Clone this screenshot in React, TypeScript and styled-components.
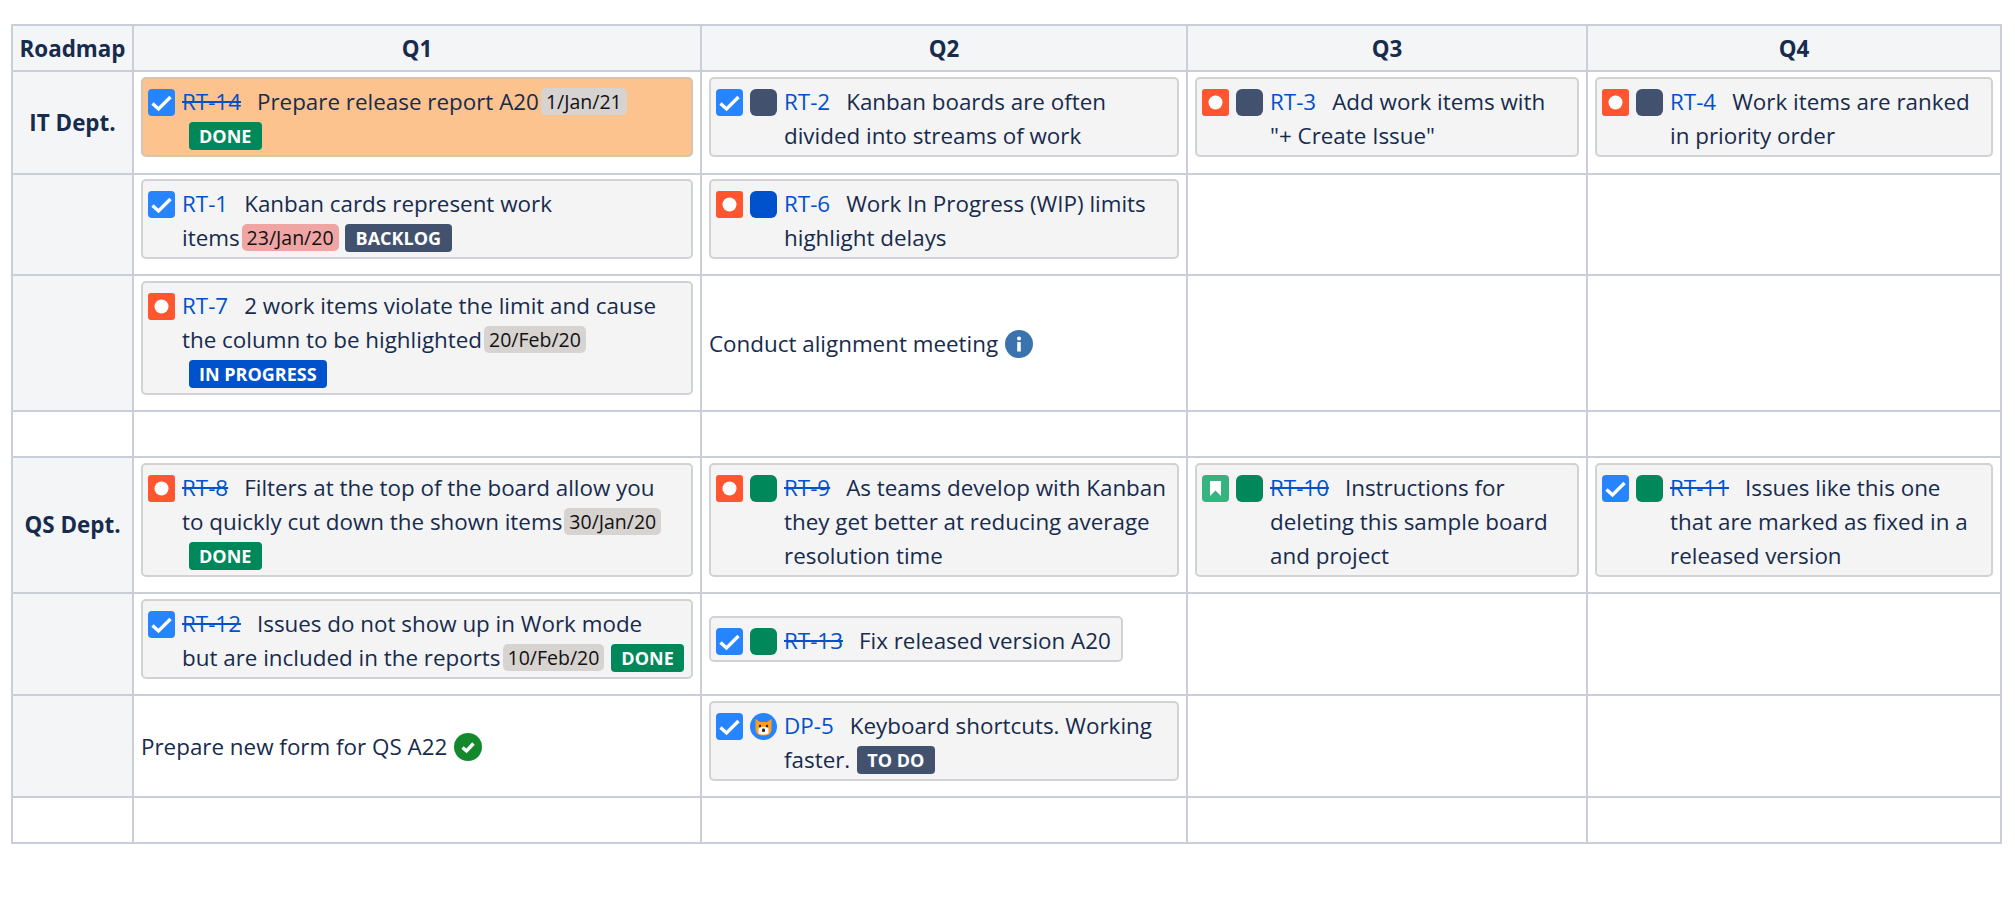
import React from "react";
import styled, { createGlobalStyle } from "styled-components";

const Global = createGlobalStyle`
  html, body { margin: 0; padding: 0; background: #fff; }
  body { font-family: "Open Sans", "Noto Sans", sans-serif; font-size: 22.4px; color: #172b4d; }
`;

const Page = styled.div`
  padding: 24px 0 0 11px;
`;

const Board = styled.table`
  border-collapse: collapse;
  table-layout: fixed;
  width: 1989px;
  line-height: 34px;
`;

const Col = styled.col<{ $w: number }>`
  width: ${(p) => p.$w}px;
`;

const Row = styled.tr<{ $h: number }>`
  height: ${(p) => p.$h}px;
`;

const HeadCell = styled.th`
  border: 2px solid #c9ced9;
  background: #f4f5f7;
  font-weight: 700;
  text-align: center;
  padding: 2px 0 0;
`;

const SideCell = styled.th<{ $plain?: boolean }>`
  border: 2px solid #c9ced9;
  background: ${(p) => (p.$plain ? "#fff" : "#f4f5f7")};
  font-weight: 700;
  text-align: center;
  padding: 0;
`;

const Cell = styled.td`
  border: 2px solid #c9ced9;
  padding: 1px 7px 3px;
  vertical-align: middle;
`;

const Card = styled.div<{ $hot?: boolean; $fit?: boolean }>`
  display: flex;
  gap: 7px;
  box-sizing: border-box;
  width: ${(p) => (p.$fit ? "fit-content" : "auto")};
  margin-bottom: 9px;
  padding: 6px ${(p) => (p.$fit ? "10px" : "5px")} 2px 5px;
  border: 2px solid ${(p) => (p.$hot ? "#d6c3b0" : "#d0d2d6")};
  border-radius: 5px;
  background: ${(p) => (p.$hot ? "#fcc38f" : "#f4f4f4")};
`;

const IconBox = styled.svg`
  flex: none;
  width: 27px;
  height: 27px;
  margin-top: 4px;
  display: block;
`;

const Body = styled.div`
  min-width: 0;
  white-space: nowrap;
`;

const Key = styled.a<{ $done?: boolean }>`
  color: #0052cc;
  text-decoration: ${(p) => (p.$done ? "line-through" : "none")};
  margin-right: 16px;
`;

const DateChip = styled.span<{ $late?: boolean }>`
  display: inline-block;
  height: 27px;
  line-height: 27px;
  margin: 3px 0 0 2px;
  padding: 0 5px;
  border-radius: 5px;
  background: ${(p) => (p.$late ? "#f0a5a5" : "#d7d3d1")};
  color: #111;
  font-size: 19.5px;
  vertical-align: top;
`;

const Lozenge = styled.span<{ $tone: string }>`
  display: inline-block;
  height: 28px;
  line-height: 28px;
  margin: 3px 0 0 6.5px;
  padding: 0 10.5px;
  border-radius: 4px;
  background: ${(p) => p.$tone};
  color: #fff;
  font-size: 18px;
  font-weight: 700;
  vertical-align: top;
`;

const Note = styled.div`
  display: flex;
  align-items: center;
  gap: 7px;
  padding-top: 4px;
  white-space: nowrap;
`;

const CheckIcon = () => (
  <IconBox viewBox="0 0 27 27">
    <rect width="27" height="27" rx="4" fill="#2684ff" />
    <path d="M4.5 14.5 L10.5 20 L22.5 8" fill="none" stroke="#fff" strokeWidth="3.4" />
  </IconBox>
);

const BugIcon = () => (
  <IconBox viewBox="0 0 27 27">
    <rect width="27" height="27" rx="3" fill="#ff5630" />
    <circle cx="13.5" cy="13.5" r="7" fill="#fff" />
  </IconBox>
);

const StoryIcon = () => (
  <IconBox viewBox="0 0 27 27">
    <rect width="27" height="27" rx="4" fill="#36b37e" />
    <path d="M8 6 H19 V21 L13.5 15.5 L8 21 Z" fill="#fff" />
  </IconBox>
);

const BlockIcon = ({ fill }: { fill: string }) => (
  <IconBox viewBox="0 0 27 27">
    <rect width="27" height="27" rx="6" fill={fill} />
  </IconBox>
);

const CatIcon = () => (
  <IconBox viewBox="0 0 27 27">
    <circle cx="13.5" cy="13.5" r="13.5" fill="#2684ff" />
    <path d="M5.5 6 L10 9 H17 L21.5 6 L21.5 17 Q21 22.5 13.5 22.5 Q6 22.5 5.5 17 Z" fill="#ff9f1a" />
    <path d="M8.5 15.5 Q13.5 12 18.5 15.5 L18.5 20.5 Q13.5 23 8.5 20.5 Z" fill="#fff" />
    <circle cx="10" cy="13" r="1.2" fill="#42210b" />
    <circle cx="17" cy="13" r="1.2" fill="#42210b" />
    <rect x="12" y="15.5" width="3" height="3.5" rx="1" fill="#42210b" />
  </IconBox>
);

const NoteIconBox = styled.svg`
  width: 28px;
  height: 28px;
  flex: none;
  display: block;
`;

const InfoIcon = () => (
  <NoteIconBox viewBox="0 0 28 28">
    <circle cx="14" cy="14" r="14" fill="#3b73af" />
    <circle cx="14" cy="8.5" r="2" fill="#fff" />
    <rect x="12.2" y="12" width="3.6" height="9.5" rx="0.6" fill="#fff" />
  </NoteIconBox>
);

const TickIcon = () => (
  <NoteIconBox viewBox="0 0 28 28">
    <circle cx="14" cy="14" r="14" fill="#14892c" />
    <path d="M8.5 14.5 L12.5 18 L19.5 10.5" fill="none" stroke="#fff" strokeWidth="3.4" />
  </NoteIconBox>
);

const NAVY = "#42526e";
const GREEN = "#00875a";
const BLUE = "#0052cc";

const App = () => (
  <Page>
    <Global />
    <Board>
      <colgroup>
        <Col $w={121} />
        <Col $w={568} />
        <Col $w={486} />
        <Col $w={400} />
        <Col $w={414} />
      </colgroup>
      <tbody>
        <Row $h={46}>
          <HeadCell>Roadmap</HeadCell>
          <HeadCell>Q1</HeadCell>
          <HeadCell>Q2</HeadCell>
          <HeadCell>Q3</HeadCell>
          <HeadCell>Q4</HeadCell>
        </Row>
        <Row $h={103}>
          <SideCell>IT Dept.</SideCell>
          <Cell>
            <Card $hot>
              <CheckIcon />
              <Body>
                <Key $done>RT-14</Key>Prepare release report A20
                <DateChip>1/Jan/21</DateChip>
                <br />
                <Lozenge $tone={GREEN}>DONE</Lozenge>
              </Body>
            </Card>
          </Cell>
          <Cell>
            <Card>
              <CheckIcon />
              <BlockIcon fill={NAVY} />
              <Body>
                <Key>RT-2</Key>Kanban boards are often
                <br />
                divided into streams of work
              </Body>
            </Card>
          </Cell>
          <Cell>
            <Card>
              <BugIcon />
              <BlockIcon fill={NAVY} />
              <Body>
                <Key>RT-3</Key>Add work items with
                <br />
                "+ Create Issue"
              </Body>
            </Card>
          </Cell>
          <Cell>
            <Card>
              <BugIcon />
              <BlockIcon fill={NAVY} />
              <Body>
                <Key>RT-4</Key>Work items are ranked
                <br />
                in priority order
              </Body>
            </Card>
          </Cell>
        </Row>
        <Row $h={101}>
          <SideCell />
          <Cell>
            <Card>
              <CheckIcon />
              <Body>
                <Key>RT-1</Key>Kanban cards represent work
                <br />
                items<DateChip $late>23/Jan/20</DateChip>
                <Lozenge $tone={NAVY}>BACKLOG</Lozenge>
              </Body>
            </Card>
          </Cell>
          <Cell>
            <Card>
              <BugIcon />
              <BlockIcon fill={BLUE} />
              <Body>
                <Key>RT-6</Key>Work In Progress (WIP) limits
                <br />
                highlight delays
              </Body>
            </Card>
          </Cell>
          <Cell />
          <Cell />
        </Row>
        <Row $h={136}>
          <SideCell />
          <Cell>
            <Card>
              <BugIcon />
              <Body>
                <Key>RT-7</Key>2 work items violate the limit and cause
                <br />
                the column to be highlighted<DateChip>20/Feb/20</DateChip>
                <br />
                <Lozenge $tone={BLUE}>IN PROGRESS</Lozenge>
              </Body>
            </Card>
          </Cell>
          <Cell>
            <Note>
              Conduct alignment meeting
              <InfoIcon />
            </Note>
          </Cell>
          <Cell />
          <Cell />
        </Row>
        <Row $h={46}>
          <SideCell $plain />
          <Cell />
          <Cell />
          <Cell />
          <Cell />
        </Row>
        <Row $h={136}>
          <SideCell>QS Dept.</SideCell>
          <Cell>
            <Card>
              <BugIcon />
              <Body>
                <Key $done>RT-8</Key>Filters at the top of the board allow you
                <br />
                to quickly cut down the shown items<DateChip>30/Jan/20</DateChip>
                <br />
                <Lozenge $tone={GREEN}>DONE</Lozenge>
              </Body>
            </Card>
          </Cell>
          <Cell>
            <Card>
              <BugIcon />
              <BlockIcon fill={GREEN} />
              <Body>
                <Key $done>RT-9</Key>As teams develop with Kanban
                <br />
                they get better at reducing average
                <br />
                resolution time
              </Body>
            </Card>
          </Cell>
          <Cell>
            <Card>
              <StoryIcon />
              <BlockIcon fill={GREEN} />
              <Body>
                <Key $done>RT-10</Key>Instructions for
                <br />
                deleting this sample board
                <br />
                and project
              </Body>
            </Card>
          </Cell>
          <Cell>
            <Card>
              <CheckIcon />
              <BlockIcon fill={GREEN} />
              <Body>
                <Key $done>RT-11</Key>Issues like this one
                <br />
                that are marked as fixed in a
                <br />
                released version
              </Body>
            </Card>
          </Cell>
        </Row>
        <Row $h={102}>
          <SideCell />
          <Cell>
            <Card>
              <CheckIcon />
              <Body>
                <Key $done>RT-12</Key>Issues do not show up in Work mode
                <br />
                but are included in the reports<DateChip>10/Feb/20</DateChip>
                <Lozenge $tone={GREEN}>DONE</Lozenge>
              </Body>
            </Card>
          </Cell>
          <Cell>
            <Card $fit>
              <CheckIcon />
              <BlockIcon fill={GREEN} />
              <Body>
                <Key $done>RT-13</Key>Fix released version A20
              </Body>
            </Card>
          </Cell>
          <Cell />
          <Cell />
        </Row>
        <Row $h={102}>
          <SideCell />
          <Cell>
            <Note>
              Prepare new form for QS A22
              <TickIcon />
            </Note>
          </Cell>
          <Cell>
            <Card>
              <CheckIcon />
              <CatIcon />
              <Body>
                <Key>DP-5</Key>Keyboard shortcuts. Working
                <br />
                faster.<Lozenge $tone={NAVY}>TO DO</Lozenge>
              </Body>
            </Card>
          </Cell>
          <Cell />
          <Cell />
        </Row>
        <Row $h={46}>
          <SideCell $plain />
          <Cell />
          <Cell />
          <Cell />
          <Cell />
        </Row>
      </tbody>
    </Board>
  </Page>
);

export default App;
